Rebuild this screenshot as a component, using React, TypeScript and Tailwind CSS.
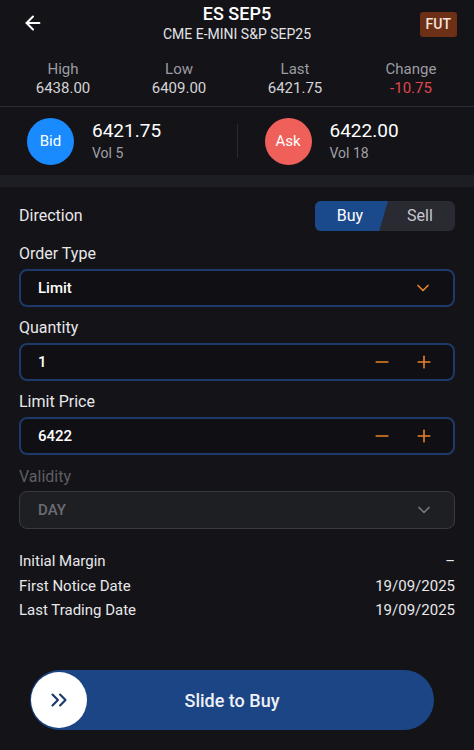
import { ArrowLeft, ChevronDown, ChevronsRight, Minus, Plus } from "lucide-react";

const stats = [
  { label: "High", value: "6438.00", tone: "text-[#d4d4d6]" },
  { label: "Low", value: "6409.00", tone: "text-[#d4d4d6]" },
  { label: "Last", value: "6421.75", tone: "text-[#d4d4d6]" },
  { label: "Change", value: "-10.75", tone: "text-[#e0474c]" },
];

const info = [
  { label: "Initial Margin", value: "–" },
  { label: "First Notice Date", value: "19/09/2025" },
  { label: "Last Trading Date", value: "19/09/2025" },
];

function Quote({ side, price, vol, color }: { side: string; price: string; vol: string; color: string }) {
  return (
    <div className="flex flex-1 items-center gap-[18px] pl-[27px]">
      <div className={`flex h-[47px] w-[47px] items-center justify-center rounded-full text-[15px] text-white ${color}`}>
        {side}
      </div>
      <div className="flex flex-col">
        <span className="text-[19px] leading-6 text-white">{price}</span>
        <span className="text-[14px] leading-5 text-[#a0a0a6]">{vol}</span>
      </div>
    </div>
  );
}

function Stepper({ value }: { value: string }) {
  return (
    <div className="flex h-[38px] items-center rounded-[8px] border-2 border-[#1d3a68] bg-[#101014] pl-[17px] pr-[19px]">
      <span className="flex-1 text-[15px] font-medium text-white">{value}</span>
      <Minus className="mr-[22px] h-[20px] w-[20px] text-[#e8832a]" strokeWidth={1.9} />
      <Plus className="h-[20px] w-[20px] text-[#e8832a]" strokeWidth={1.9} />
    </div>
  );
}

export default function App() {
  return (
    <div
      className="flex h-[750px] w-[474px] flex-col bg-[#131318] text-[#e8e8ea]"
      style={{ fontFamily: "Roboto, 'Liberation Sans', sans-serif" }}
    >
      {/* header */}
      <div className="flex h-[50px] items-start">
        <div className="flex w-[60px] pl-[22px] pt-[12px]">
          <ArrowLeft className="h-[22px] w-[22px] text-white" strokeWidth={2.2} />
        </div>
        <div className="flex flex-1 flex-col items-center pt-[3px]">
          <span className="text-[18px] font-medium leading-[22px] text-white">ES SEP5</span>
          <span className="text-[14px] leading-[18px] text-[#e4e4e6]">CME E-MINI S&amp;P SEP25</span>
        </div>
        <div className="flex w-[60px] justify-end pr-[17px] pt-[12px]">
          <span className="rounded-[3px] bg-[#6e2f17] px-[6px] py-[2px] text-[14px] font-medium text-[#f3e4dc]">FUT</span>
        </div>
      </div>

      {/* stats */}
      <div className="grid h-[56px] grid-cols-4 px-[5px] pt-[10px]">
        {stats.map((s) => (
          <div key={s.label} className="flex flex-col items-center">
            <span className="text-[15px] leading-[19px] text-[#9c9ca2]">{s.label}</span>
            <span className={`text-[15px] leading-[19px] ${s.tone}`}>{s.value}</span>
          </div>
        ))}
      </div>
      <div className="h-px bg-[#2a2b30]" />

      {/* bid / ask */}
      <div className="flex h-[68px] items-center">
        <Quote side="Bid" price="6421.75" vol="Vol 5" color="bg-[#1a8bff]" />
        <div className="h-[34px] w-px bg-[#2a2b30]" />
        <Quote side="Ask" price="6422.00" vol="Vol 18" color="bg-[#f0605a]" />
      </div>
      <div className="h-[12px] bg-[#1d1e23]" />

      {/* form */}
      <div className="flex flex-col px-[19px] pt-[14px]">
        <div className="flex items-center justify-between">
          <span className="text-[16px] text-[#e8e8ea]">Direction</span>
          <div className="relative flex h-[30px] w-[140px] overflow-hidden rounded-[6px] bg-[#292a32]">
            <div className="absolute inset-y-0 left-0 w-[73px] bg-[#1b4a8c] [clip-path:polygon(0_0,100%_0,88%_100%,0_100%)]" />
            <span className="relative flex w-[70px] items-center justify-center text-[16px] text-white">Buy</span>
            <span className="relative flex w-[70px] items-center justify-center text-[16px] text-[#c8c8cc]">Sell</span>
          </div>
        </div>

        <span className="mt-[13px] text-[16px] leading-[20px]">Order Type</span>
        <div className="mt-[5px] flex h-[38px] items-center rounded-[8px] border-2 border-[#1d3a68] bg-[#101014] pl-[17px] pr-[20px]">
          <span className="flex-1 text-[15px] font-medium text-white">Limit</span>
          <ChevronDown className="h-[20px] w-[20px] text-[#e8832a]" strokeWidth={2} />
        </div>

        <span className="mt-[11px] text-[16px] leading-[20px]">Quantity</span>
        <div className="mt-[5px]">
          <Stepper value="1" />
        </div>

        <span className="mt-[11px] text-[16px] leading-[20px]">Limit Price</span>
        <div className="mt-[5px]">
          <Stepper value="6422" />
        </div>

        <span className="mt-[12px] text-[16px] leading-[20px] text-[#5e5f64]">Validity</span>
        <div className="mt-[4px] flex h-[38px] items-center rounded-[8px] border border-[#3a3b40] bg-[#1e1f23] pl-[18px] pr-[20px]">
          <span className="flex-1 text-[15px] font-medium text-[#6c6d72]">DAY</span>
          <ChevronDown className="h-[20px] w-[20px] text-[#7a7b80]" strokeWidth={2} />
        </div>

        <div className="mt-[20px] flex flex-col">
          {info.map((r) => (
            <div key={r.label} className="flex h-[24.5px] items-center justify-between text-[15px] text-[#e8e8ea]">
              <span>{r.label}</span>
              <span>{r.value}</span>
            </div>
          ))}
        </div>
      </div>

      {/* slider */}
      <div className="mt-auto flex pb-[20px] pl-[30px]">
        <div className="relative flex h-[60px] w-[404px] items-center justify-center rounded-full bg-[#1c4585]">
          <div className="absolute left-[1px] top-[2px] flex h-[56px] w-[56px] items-center justify-center rounded-full bg-white">
            <ChevronsRight className="h-[26px] w-[26px] text-[#1c3a6e]" strokeWidth={2} />
          </div>
          <span className="text-[18px] font-medium text-[#eef1f7]">Slide to Buy</span>
        </div>
      </div>
    </div>
  );
}
